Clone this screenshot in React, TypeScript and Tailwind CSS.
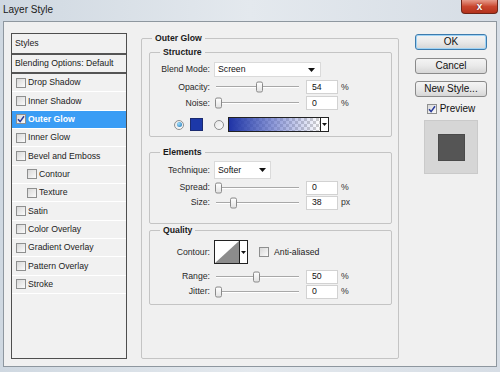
import React from "react";

function Check({ checked = false }: { checked?: boolean }) {
  return (
    <span className="w-[10px] h-[10px] border border-[#8e8f8f] bg-gradient-to-br from-[#d8d8d8] to-[#fbfbfb] flex items-center justify-center shrink-0">
      {checked && (
        <svg width="8" height="8" viewBox="0 0 8 8">
          <path d="M1 4.2 L3.1 6.6 L7 1.2" fill="none" stroke="#27399a" strokeWidth="1.5" />
        </svg>
      )}
    </span>
  );
}

function Radio({ on = false }: { on?: boolean }) {
  return (
    <span className="w-[10px] h-[10px] rounded-full border border-[#8e8f8f] bg-gradient-to-br from-[#e6e6e6] to-[#fdfdfd] flex items-center justify-center shrink-0">
      {on && <span className="w-[5px] h-[5px] rounded-full bg-[radial-gradient(circle_at_35%_35%,#9fe0ff,#1a6fb0)]" />}
    </span>
  );
}

function Arrow() {
  return (
    <svg width="7" height="4" viewBox="0 0 7 4" className="shrink-0">
      <path d="M0 0 H7 L3.5 4 Z" fill="#111" />
    </svg>
  );
}

function Label({ children }: { children: React.ReactNode }) {
  return <span className="w-[60px] text-right text-[#2a2a2a] shrink-0">{children}</span>;
}

function Slider({ pos }: { pos: number }) {
  return (
    <div className="relative w-[85px] h-full ml-[4px] shrink-0 flex items-center">
      <div className="ml-[2px] w-[83px] h-[2px] border-t border-[#a8a8a8] border-b border-b-white" />
      <div
        className="absolute top-1/2 -translate-y-1/2 w-[7px] h-[11px] rounded-[2px] border border-[#8a8a8a] bg-gradient-to-b from-white to-[#e2e2e2]"
        style={{ left: pos }}
      />
    </div>
  );
}

function NumInput({ value, unit }: { value: string; unit: string }) {
  return (
    <>
      <div className="ml-[7px] w-[32px] h-[14px] bg-white border border-[#d2d2d2] flex items-center pl-[5px] text-[#111] shrink-0">
        {value}
      </div>
      <span className="ml-[3px] text-[#333]">{unit}</span>
    </>
  );
}

function SliderRow({ label, pos, value, unit }: { label: string; pos: number; value: string; unit: string }) {
  return (
    <div className="h-[15px] flex items-center">
      <Label>{label}</Label>
      <Slider pos={pos} />
      <NumInput value={value} unit={unit} />
    </div>
  );
}

function Group({ title, className, children }: { title: string; className?: string; children: React.ReactNode }) {
  return (
    <fieldset className={"border border-[#c4c4c4] rounded-[2px] " + (className || "")}>
      <legend className="ml-[10px] px-[3px] leading-[12px] font-bold text-[#1a1a1a]">{title}</legend>
      {children}
    </fieldset>
  );
}

const items: { label: string; checked?: boolean; selected?: boolean; nested?: boolean }[] = [
  { label: "Drop Shadow" },
  { label: "Inner Shadow" },
  { label: "Outer Glow", checked: true, selected: true },
  { label: "Inner Glow" },
  { label: "Bevel and Emboss" },
  { label: "Contour", nested: true },
  { label: "Texture", nested: true },
  { label: "Satin" },
  { label: "Color Overlay" },
  { label: "Gradient Overlay" },
  { label: "Pattern Overlay" },
  { label: "Stroke" },
];

function Btn({ children, primary = false }: { children: React.ReactNode; primary?: boolean }) {
  return (
    <div
      className={
        "h-[16px] w-[72px] rounded-[3px] border flex items-center justify-center text-[10px] text-[#111] bg-gradient-to-b from-[#f4f4f4] via-[#e9e9e9] to-[#d6d6d6] " +
        (primary ? "border-[#3d7bad] shadow-[inset_0_0_0_1px_#9fd3f5]" : "border-[#8a8a8a]")
      }
    >
      {children}
    </div>
  );
}

export default function App() {
  return (
    <div className="w-[500px] h-[372px] overflow-hidden flex flex-col bg-gradient-to-r from-[#cfd8e1] via-[#e4e9ee] to-[#d6dde5] font-['Liberation_Sans',Arial,sans-serif] text-[8.7px] leading-none">
      {/* title bar */}
      <div className="h-[21px] flex items-start justify-between shrink-0">
        <span className="ml-[3px] mt-[5px] text-[10px] text-[#1a1a1a]">Layer Style</span>
        <div className="mr-[2px] w-[37px] h-[14px] rounded-b-[4px] border border-t-0 border-[#6e2418] bg-gradient-to-b from-[#e59a8a] via-[#c9462f] to-[#b3321c] flex items-center justify-center">
          <span className="text-white font-bold text-[10px] leading-none [text-shadow:0_0_2px_#5a1208]">x</span>
        </div>
      </div>

      {/* body */}
      <div className="mx-[3px] h-[346px] border border-[#8e979f] bg-[#f0f0f0] flex items-start pt-[10px] shrink-0">
        {/* left list */}
        <div className="ml-[7px] mt-[1px] w-[116px] h-[326px] border border-[#4e4e4e] bg-[#f1f1f1] flex flex-col shrink-0">
          <div className="h-[21px] border-b-2 border-[#555] flex items-center pl-[3px] text-[#1a1a1a]">Styles</div>
          <div className="h-[19px] border-b-2 border-[#555] flex items-center pl-[3px] text-[#1a1a1a]">Blending Options: Default</div>
          {items.map((it) => (
            <div
              key={it.label}
              className={
                "h-[18.33px] border-b border-white flex items-center gap-[2px] " +
                (it.nested ? "pl-[15px] " : "pl-[4px] ") +
                (it.selected ? "bg-[#3a9df5] text-white font-bold" : "text-[#222]")
              }
            >
              <Check checked={it.checked} />
              <span>{it.label}</span>
            </div>
          ))}
        </div>

        {/* main settings */}
        <fieldset className="ml-[14px] w-[258px] h-[327px] border border-[#c4c4c4] rounded-[2px] shrink-0">
          <legend className="ml-[10px] px-[3px] leading-[12px] font-bold text-[#1a1a1a]">Outer Glow</legend>
          <div className="pl-[7px] pr-[6px] pt-[2px] flex flex-col">
            <Group title="Structure" className="pb-[3px]">
              <div className="mt-[4px] h-[15px] flex items-center">
                <Label>Blend Mode:</Label>
                <div className="ml-[4px] w-[107px] h-[15px] bg-white border border-[#dadada] flex items-center justify-between pl-[3px] pr-[5px] text-[#111]">
                  <span>Screen</span>
                  <Arrow />
                </div>
              </div>
              <div className="mt-[2px] h-[16px] flex items-center">
                <Label>Opacity:</Label>
                <Slider pos={42} />
                <NumInput value="54" unit="%" />
              </div>
              <div className="h-[16px] flex items-center">
                <Label>Noise:</Label>
                <Slider pos={1} />
                <NumInput value="0" unit="%" />
              </div>
              <div className="mt-[5px] h-[17px] flex items-center">
                <span className="ml-[24px]">
                  <Radio on />
                </span>
                <span className="ml-[6px] w-[13px] h-[13px] bg-[#1c38a8] border border-[#1a2a70] shrink-0" />
                <span className="ml-[11px]">
                  <Radio />
                </span>
                <div className="ml-[4px] w-[101px] h-[15px] border border-[#222] flex shrink-0">
                  <div className="flex-1 bg-[conic-gradient(#cfcfcf_25%,#ffffff_0_50%,#cfcfcf_0_75%,#ffffff_0)] bg-[length:6px_6px]">
                    <div className="w-full h-full bg-gradient-to-r from-[#1f33a6] via-[#5f6fc8]/70 to-transparent" />
                  </div>
                  <div className="w-[8px] border-l border-[#222] bg-white flex items-center justify-center">
                    <svg width="5" height="3" viewBox="0 0 5 3">
                      <path d="M0 0 H5 L2.5 3 Z" fill="#111" />
                    </svg>
                  </div>
                </div>
              </div>
            </Group>

            <Group title="Elements" className="mt-[9px] pb-[13px]">
              <div className="mt-[3px] h-[18px] flex items-center">
                <Label>Technique:</Label>
                <div className="ml-[4px] w-[57px] h-[18px] bg-white border border-[#dadada] flex items-center justify-between pl-[3px] pr-[4px] text-[#111]">
                  <span>Softer</span>
                  <Arrow />
                </div>
              </div>
              <div className="mt-[1px]">
                <SliderRow label="Spread:" pos={1} value="0" unit="%" />
              </div>
              <SliderRow label="Size:" pos={16} value="38" unit="px" />
            </Group>

            <Group title="Quality" className="pb-[5px]">
              <div className="mt-[4px] h-[24px] flex items-center">
                <Label>Contour:</Label>
                <div className="ml-[4px] w-[34px] h-[24px] border border-[#222] flex bg-white shrink-0">
                  <svg width="24" height="22" viewBox="0 0 24 22" className="shrink-0">
                    <rect width="24" height="22" fill="#fff" />
                    <path d="M0 22 L24 0 L24 22 Z" fill="#8c8c8c" />
                  </svg>
                  <div className="flex-1 border-l border-[#222] flex items-center justify-center">
                    <svg width="5" height="3" viewBox="0 0 5 3">
                      <path d="M0 0 H5 L2.5 3 Z" fill="#111" />
                    </svg>
                  </div>
                </div>
                <span className="ml-[11px]">
                  <Check />
                </span>
                <span className="ml-[5px] text-[#222]">Anti-aliased</span>
              </div>
              <div className="mt-[5px]">
                <SliderRow label="Range:" pos={39} value="50" unit="%" />
              </div>
              <SliderRow label="Jitter:" pos={1} value="0" unit="%" />
            </Group>
          </div>
        </fieldset>

        {/* buttons */}
        <div className="ml-[16px] mt-[2px] w-[72px] flex flex-col items-center shrink-0">
          <Btn primary>OK</Btn>
          <div className="mt-[8px]">
            <Btn>Cancel</Btn>
          </div>
          <div className="mt-[7px]">
            <Btn>New Style...</Btn>
          </div>
          <div className="mt-[6px] h-[11px] flex items-center gap-[3px] text-[10px] text-[#111]">
            <Check checked />
            <span>Preview</span>
          </div>
          <div className="mt-[6px] w-[54px] h-[54px] bg-[#d6d6d6] border border-[#cacaca] flex items-center justify-center">
            <div className="w-[27px] h-[27px] bg-[#555555] border border-[#4a4a4a]" />
          </div>
        </div>
      </div>
    </div>
  );
}
